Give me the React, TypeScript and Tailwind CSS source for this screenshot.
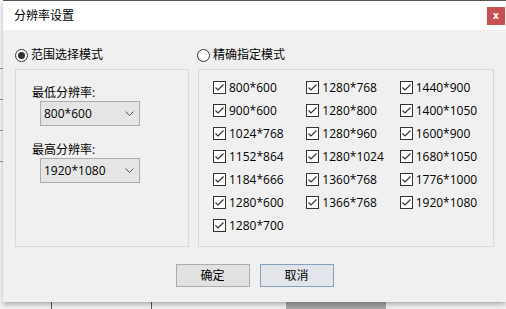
import React from 'react';

const columns: string[][] = [
  ['800*600', '900*600', '1024*768', '1152*864', '1184*666', '1280*600', '1280*700'],
  ['1280*768', '1280*800', '1280*960', '1280*1024', '1360*768', '1366*768'],
  ['1440*900', '1400*1050', '1600*900', '1680*1050', '1776*1000', '1920*1080'],
];

const Radio: React.FC<{ checked?: boolean; label: string }> = ({ checked, label }) => (
  <div className="flex items-center h-[14px] gap-[3px]">
    <div className="w-[13px] h-[13px] rounded-full border border-[#333333] bg-white flex items-center justify-center">
      {checked && <div className="w-[7px] h-[7px] rounded-full bg-[#333333]" />}
    </div>
    <span className="leading-[14px]">{label}</span>
  </div>
);

const Check: React.FC<{ label: string }> = ({ label }) => (
  <div className="flex items-center h-[23px] gap-[3px]">
    <div className="w-[13px] h-[13px] border border-[#333333] bg-white flex items-center justify-center">
      <svg width="11" height="11" viewBox="0 0 11 11">
        <path d="M1.5 5.5 L4 8 L9.5 2.5" fill="none" stroke="#333333" strokeWidth="1.2" />
      </svg>
    </div>
    <span>{label}</span>
  </div>
);

const Combo: React.FC<{ value: string }> = ({ value }) => (
  <div className="ml-[8px] w-[100px] h-[25px] bg-[#e5e5e5] border border-[#adadad] flex items-center justify-between pl-[3px] pr-[5px]">
    <span>{value}</span>
    <svg width="9" height="5" viewBox="0 0 9 5">
      <path d="M0.5 0.5 L4.5 4.5 L8.5 0.5" fill="none" stroke="#555555" strokeWidth="1" />
    </svg>
  </div>
);

export default function App() {
  return (
    <div
      className="relative w-[506px] h-[309px] overflow-hidden bg-white text-[12px] text-black"
      style={{ fontFamily: '"Segoe UI", "Open Sans", "Noto Sans CJK SC", sans-serif' }}
    >
      {/* app behind the dialog */}
      <div className="absolute inset-0 flex flex-col">
        <div className="flex-1 flex">
          <div className="w-[3px] flex flex-col gap-[30px] pt-[68px]">
            <div className="h-px bg-[#9a9a9a]" />
            <div className="h-px bg-[#9a9a9a]" />
            <div className="h-px bg-[#9a9a9a]" />
            <div className="h-px bg-[#9a9a9a]" />
          </div>
        </div>
        <div className="h-[8px] flex bg-[#f4f4f4]">
          <div className="w-[51px]" />
          <div className="w-px bg-[#555555]" />
          <div className="w-[99px]" />
          <div className="w-px bg-[#555555]" />
          <div className="w-[134px]" />
          <div className="w-[100px] bg-[#a8a8a8]" />
        </div>
      </div>

      {/* dialog window */}
      <div className="absolute left-[3px] top-0 w-[503px] h-[302px] flex flex-col border-t border-[#555555] shadow-[0_2px_6px_rgba(0,0,0,0.35)]">
        <div className="h-[29px] bg-white flex items-center justify-between pl-[11px] pr-[1px]">
          <span className="text-[12px]">分辨率设置</span>
          <div className="w-[18px] h-[18px] bg-[#c75050] flex items-center justify-center text-white text-[10px] font-bold leading-none pb-[2px]">
            x
          </div>
        </div>

        <div className="flex-1 bg-[#f0f0f0] flex flex-col pt-[18px]">
          <div className="flex pl-[12px] gap-[9px]">
            <div className="w-[174px] flex flex-col">
              <Radio checked label="范围选择模式" />
              <div className="mt-[7px] h-[178px] border border-[#dadada] pl-[16px] pt-[15px] flex flex-col">
                <span className="leading-[16px]">最低分辨率:</span>
                <Combo value="800*600" />
                <span className="leading-[16px] mt-[16px]">最高分辨率:</span>
                <Combo value="1920*1080" />
              </div>
            </div>
            <div className="w-[296px] flex flex-col">
              <div className="-ml-[1px]">
                <Radio label="精确指定模式" />
              </div>
              <div className="mt-[7px] h-[178px] border border-[#dadada] pl-[14px] pt-[6px] flex">
                {columns.map((col, i) => (
                  <div key={i} className="w-[95px] flex flex-col">
                    {col.map((r) => (
                      <Check key={r} label={r} />
                    ))}
                  </div>
                ))}
              </div>
            </div>
          </div>

          <div className="mt-[17px] flex justify-center gap-[10px]">
            <button className="w-[74px] h-[23px] bg-[#e1e1e1] border border-[#adadad] flex items-center justify-center">
              确定
            </button>
            <button className="w-[74px] h-[23px] bg-[#e2e6ea] border border-[#84a0bc] flex items-center justify-center">
              取消
            </button>
          </div>
        </div>
      </div>
    </div>
  );
}
